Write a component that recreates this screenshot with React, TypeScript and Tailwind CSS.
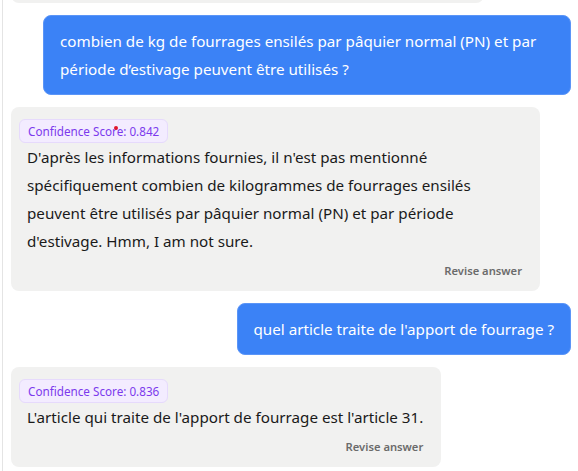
import React from 'react';

type Msg =
  | { role: 'user'; text: string }
  | { role: 'bot'; text: string; score: string; dot?: boolean };

const messages: Msg[] = [
  {
    role: 'user',
    text: 'combien de kg de fourrages ensilés par pâquier normal (PN) et par période d’estivage peuvent être utilisés ?',
  },
  {
    role: 'bot',
    score: '0.842',
    dot: true,
    text: "D'après les informations fournies, il n'est pas mentionné spécifiquement combien de kilogrammes de fourrages ensilés peuvent être utilisés par pâquier normal (PN) et par période d'estivage. Hmm, I am not sure.",
  },
  { role: 'user', text: "quel article traite de l'apport de fourrage ?" },
  {
    role: 'bot',
    score: '0.836',
    text: "L'article qui traite de l'apport de fourrage est l'article 31.",
  },
];

const BotBubble: React.FC<{ text: string; score: string; dot?: boolean }> = ({ text, score, dot }) => (
  <div className="self-start max-w-[529px] rounded-lg bg-[#f1f1f0] pl-4 pr-[18px] pt-3 pb-3">
    <span className="relative -ml-2 block w-fit rounded-md border border-[#e6dafc] bg-[#f3ecff] px-2 text-[11.7px] leading-[22px] text-[#7c3aed]">
      Confidence Score: {score}
      {dot && <span className="absolute left-[94px] top-[6px] h-[4px] w-[4px] rounded-full bg-[#e0162b]" />}
    </span>
    <p className="text-[15.2px] leading-7 text-[#1a1a1a]">{text}</p>
    <div className="mt-2 flex justify-end">
      <button className="text-[11.2px] font-semibold leading-4 text-[#6b6b6b]">Revise answer</button>
    </div>
  </div>
);

const App: React.FC = () => {
  return (
    <div
      className="h-[471px] w-[578px] overflow-hidden bg-white pl-[2px]"
      style={{ fontFamily: '"Segoe UI", "Noto Sans", "Open Sans", sans-serif' }}
    >
      <div className="flex h-full flex-col gap-3 border-l border-[#e4e4e4] pl-2 pr-[7px]">
        {/* previous answer, scrolled out of view */}
        <div className="-mt-[60px] h-[63px] w-[473px] shrink-0 rounded-lg bg-[#f1f1f0]" />

        {messages.map((m, i) =>
          m.role === 'user' ? (
            <div
              key={i}
              className="self-end max-w-[528px] rounded-lg border border-[#5b95f7] bg-[#3b82f6] px-4 py-[11px] text-[15.2px] leading-7 text-white"
            >
              {m.text}
            </div>
          ) : (
            <BotBubble key={i} text={m.text} score={m.score} dot={m.dot} />
          )
        )}
      </div>
    </div>
  );
};

export default App;
